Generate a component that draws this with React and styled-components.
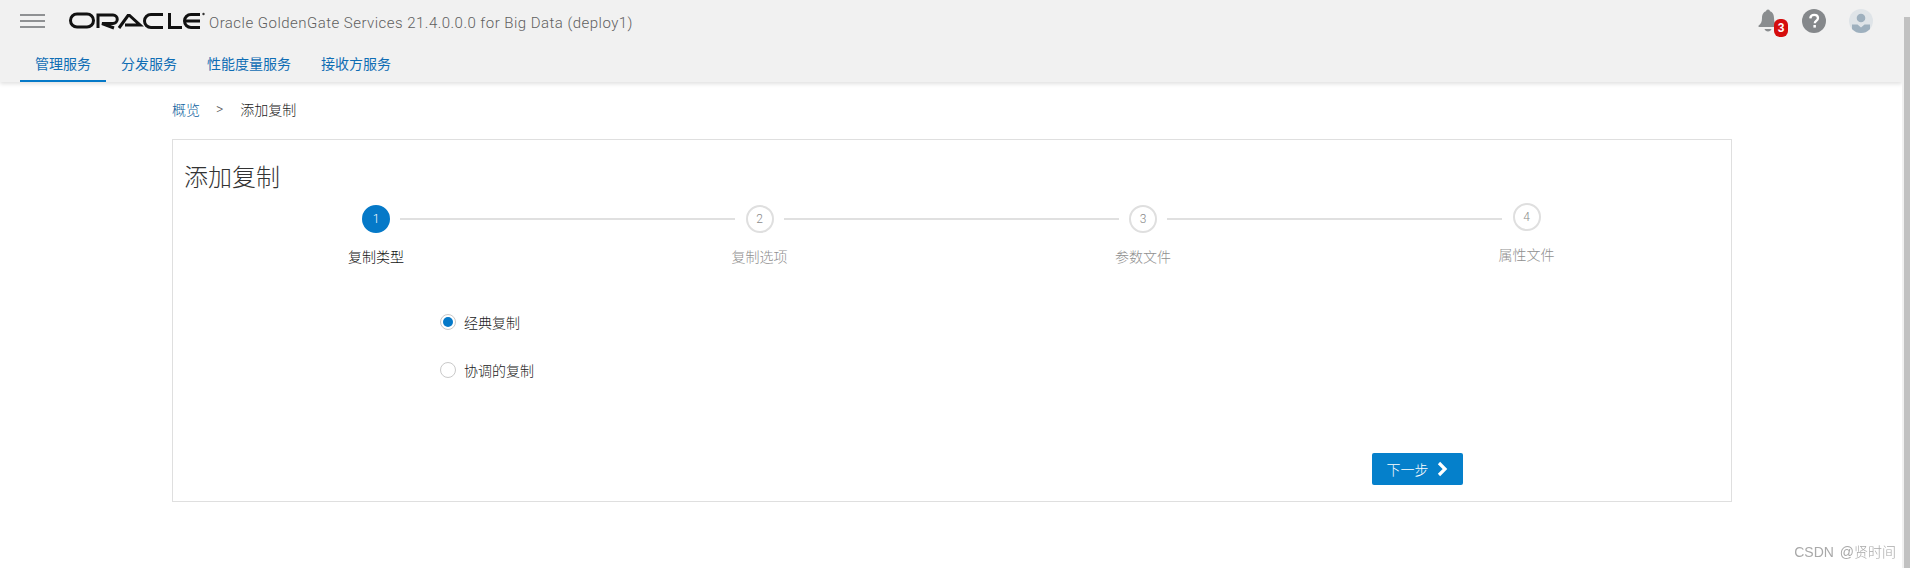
import React from "react";
import styled, { createGlobalStyle } from "styled-components";

const cjk = `"Noto Sans CJK SC", sans-serif`;

const GlobalStyle = createGlobalStyle`
  html, body {
    margin: 0;
    padding: 0;
    height: 568px;
    overflow: hidden;
    background: #fff;
    font-family: Roboto, ${cjk};
  }
`;

const Page = styled.div`
  width: 1902px;
  height: 568px;
  display: flex;
  flex-direction: column;
`;

const Header = styled.header`
  height: 82px;
  flex: none;
  background: #f1f1f1;
  box-shadow: 0 2px 4px rgba(0, 0, 0, 0.12);
  display: flex;
  flex-direction: column;
`;

const TopRow = styled.div`
  height: 42px;
  display: flex;
  align-items: center;
  padding: 0 29px 0 20px;
`;

const Burger = styled.div`
  width: 25px;
  height: 14px;
  display: flex;
  flex-direction: column;
  justify-content: space-between;
  margin-right: 24px;
  & > span {
    height: 2px;
    background: #8f9193;
  }
`;

const Logo = styled.svg`
  width: 136px;
  height: 18px;
  margin-right: 4px;
  flex: none;
`;

const AppName = styled.div`
  font-size: 15px;
  font-weight: 300;
  color: #5f5f5f;
  margin-top: 3px;
  letter-spacing: 0.47px;
`;

const TopIcons = styled.div`
  margin-left: auto;
  display: flex;
  align-items: center;
`;

const BellWrap = styled.div`
  position: relative;
  width: 22px;
  height: 24px;
  margin-right: 23px;
`;

const Badge = styled.span`
  position: absolute;
  left: 17px;
  top: 10px;
  width: 14px;
  height: 18px;
  border-radius: 6px;
  background: #d50d0d;
  color: #fff;
  font: 700 12px/18px "Liberation Sans", sans-serif;
  text-align: center;
`;

const Tabs = styled.nav`
  height: 40px;
  display: flex;
  padding-left: 20px;
`;

const Tab = styled.div`
  padding: 0 15px;
  height: 40px;
  box-sizing: border-box;
  font: 400 14px/42px ${cjk};
  color: #0f6db4;
  border-bottom: 2px solid ${(p) => (p.$active ? "#0579c8" : "transparent")};
`;

const Main = styled.main`
  padding: 0 0 0 172px;
`;

const Crumbs = styled.div`
  height: 57px;
  padding-bottom: 4px;
  box-sizing: border-box;
  display: flex;
  align-items: center;
  font: 300 14px ${cjk};
  color: #222;
`;

const CrumbLink = styled.span`
  color: #0f5f9e;
  margin-right: 16px;
`;

const CrumbSep = styled.span`
  font-family: Roboto, sans-serif;
  color: #555;
  margin-right: 17px;
`;

const Card = styled.section`
  width: 1560px;
  height: 363px;
  box-sizing: border-box;
  border: 1px solid #dfdfdf;
  padding-left: 11px;
`;

const Title = styled.h1`
  margin: 0;
  padding-top: 19px;
  height: 65px;
  box-sizing: border-box;
  font: 300 24px/34px ${cjk};
  color: #333;
`;

const Steps = styled.ol`
  list-style: none;
  margin: 0;
  padding: 0 0 0 164px;
  display: flex;
`;

const Step = styled.li`
  width: ${(p) => (p.$last ? "56px" : "383.5px")};
  flex: none;
  display: flex;
  flex-direction: column;
  align-items: flex-start;
  height: 70px;
  margin-top: ${(p) => (p.$last ? "-2px" : "0")};
`;

const StepHead = styled.div`
  display: flex;
  align-items: center;
  gap: 10px;
  padding-left: 14px;
`;

const Dot = styled.div`
  width: 28px;
  height: 28px;
  flex: none;
  box-sizing: border-box;
  border-radius: 50%;
  border: 2px solid ${(p) => (p.$active ? "#0579c8" : "#dfdfdf")};
  background: ${(p) => (p.$active ? "#0579c8" : "#fff")};
  color: ${(p) => (p.$active ? "#fff" : "#8a8a8a")};
  font: 300 12px/24px Roboto, sans-serif;
  text-align: center;
`;

const Line = styled.div`
  width: 335px;
  height: 2px;
  background: #e0e0e0;
`;

const StepLabel = styled.div`
  width: 56px;
  margin-top: 13px;
  text-align: center;
  white-space: nowrap;
  font: 300 14px/20px ${cjk};
  color: ${(p) => (p.$active ? "#111" : "#8f8f8f")};
`;

const Options = styled.div`
  padding: 0 0 0 256px;
  margin-top: 37px;
  display: flex;
  flex-direction: column;
  gap: 28px;
`;

const Option = styled.label`
  display: flex;
  align-items: center;
  height: 20px;
  gap: 8px;
  font: 300 14px/20px ${cjk};
  color: #222;
`;

const Radio = styled.span`
  width: 16px;
  height: 16px;
  box-sizing: border-box;
  border-radius: 50%;
  border: 1px solid #c9c9c9;
  background: #fff;
  display: flex;
  align-items: center;
  justify-content: center;
  &::after {
    content: "";
    width: 10px;
    height: 10px;
    border-radius: 50%;
    background: ${(p) => (p.$checked ? "#0579c8" : "transparent")};
  }
`;

const Footer = styled.div`
  display: flex;
  padding: 73px 0 0 1188px;
`;

const NextButton = styled.button`
  width: 91px;
  height: 32px;
  border: 0;
  border-radius: 2px;
  background: #0580cb;
  color: #fff;
  font: 300 14px ${cjk};
  display: flex;
  align-items: center;
  justify-content: center;
  gap: 7px;
  padding: 0;
`;

const Watermark = styled.div`
  position: fixed;
  right: 14px;
  bottom: 6px;
  font: 300 14px/20px "Liberation Sans", ${cjk};
  color: #a9a9a9;
  word-spacing: 2px;
`;

const ScrollTrack = styled.div`
  position: fixed;
  top: 0;
  right: 0;
  bottom: 0;
  width: 8px;
  background: #f1f1f1;
  display: flex;
  justify-content: flex-end;
  & > span {
    width: 6px;
    margin-top: 17px;
    background: #c1c1c1;
  }
`;

const BellIcon = () => (
  <svg width="22" height="24" viewBox="0 0 22 24">
    <circle cx="11" cy="2.5" r="2" fill="#8a8d8f" />
    <path d="M11 2c4.5 0 6 3.5 6 7 0 4 1.200 6 3.300 7.600.6.5.3 1.400-.5 1.400H2.200c-.8 0-1.100-.9-.5-1.400C3.800 15 5 13 5 9c0-3.500 1.500-7 6-7z" fill="#8a8d8f" />
    <path d="M7.500 20h7c-.4 1.500-1.800 2.500-3.500 2.500S7.900 21.500 7.500 20z" fill="#8a8d8f" />
  </svg>
);

const HelpIcon = () => (
  <svg width="24" height="24" viewBox="0 0 24 24">
    <circle cx="12" cy="12" r="12" fill="#85888b" />
    <path d="M8.300 9.300c.2-2.300 1.700-3.500 3.900-3.500 2.200 0 3.800 1.300 3.800 3.200 0 1.500-.8 2.300-1.900 3-1 .7-1.300 1.100-1.300 2.200" fill="none" stroke="#fff" strokeWidth="2.300" />
    <rect x="11.400" y="16" width="2.500" height="2.600" fill="#fff" />
  </svg>
);

const UserIcon = () => (
  <svg width="24" height="24" viewBox="0 0 24 24">
    <defs>
      <clipPath id="avatarClip">
        <circle cx="12" cy="12" r="12" />
      </clipPath>
    </defs>
    <circle cx="12" cy="12" r="12" fill="#dfe4e8" />
    <g clipPath="url(#avatarClip)" fill="#9eb0be">
      <circle cx="12" cy="9" r="4.300" />
      <path d="M3 15.500h5.500l3.500 3 3.500-3H21V25H3z" />
    </g>
  </svg>
);

const HelpSlot = styled.div`
  width: 24px;
  height: 24px;
  margin-right: 23px;
`;

const IconSlot = styled.div`
  width: 24px;
  height: 24px;
`;

const steps = ["复制类型", "复制选项", "参数文件", "属性文件"];

export default function App() {
  return (
    <Page>
      <GlobalStyle />
      <Header>
        <TopRow>
          <Burger>
            <span />
            <span />
            <span />
          </Burger>
          <Logo viewBox="0 0 136 18" role="img" aria-label="ORACLE">
            <g fill="none" stroke="#111" strokeWidth="3">
              <rect x="1.500" y="2" width="23" height="13" rx="6.500" />
              <path d="M29 16V3h15a4 4 0 0 1 0 8.500H33L45 16" />
              <path d="M50 16l9-12.500h1.500L71 13H56" />
              <path d="M94 2.500H82a6.500 6.500 0 0 0 0 13h12" />
              <path d="M100.500 1v14.500H113" />
              <path d="M131 2.500h-9a6.500 6.500 0 0 0 0 13h9M117 9h14" />
            </g>
            <circle cx="134.500" cy="2" r="1.200" fill="#333" />
          </Logo>
          <AppName>Oracle GoldenGate Services 21.4.0.0.0 for Big Data (deploy1)</AppName>
          <TopIcons>
            <BellWrap>
              <BellIcon />
              <Badge>3</Badge>
            </BellWrap>
            <HelpSlot>
              <HelpIcon />
            </HelpSlot>
            <IconSlot>
              <UserIcon />
            </IconSlot>
          </TopIcons>
        </TopRow>
        <Tabs>
          <Tab $active>管理服务</Tab>
          <Tab>分发服务</Tab>
          <Tab>性能度量服务</Tab>
          <Tab>接收方服务</Tab>
        </Tabs>
      </Header>
      <Main>
        <Crumbs>
          <CrumbLink>概览</CrumbLink>
          <CrumbSep>&gt;</CrumbSep>
          添加复制
        </Crumbs>
        <Card>
          <Title>添加复制</Title>
          <Steps>
            {steps.map((label, i) => (
              <Step key={label} $last={i === 3}>
                <StepHead>
                  <Dot $active={i === 0}>{i + 1}</Dot>
                  {i < 3 && <Line />}
                </StepHead>
                <StepLabel $active={i === 0}>{label}</StepLabel>
              </Step>
            ))}
          </Steps>
          <Options>
            <Option>
              <Radio $checked />
              经典复制
            </Option>
            <Option>
              <Radio />
              协调的复制
            </Option>
          </Options>
          <Footer>
            <NextButton>
              下一步
              <svg width="13" height="16" viewBox="0 0 13 16">
                <path d="M3 2l6 6-6 6" fill="none" stroke="#fff" strokeWidth="3.200" />
              </svg>
            </NextButton>
          </Footer>
        </Card>
      </Main>
      <Watermark>CSDN @贤时间</Watermark>
      <ScrollTrack>
        <span />
      </ScrollTrack>
    </Page>
  );
}
